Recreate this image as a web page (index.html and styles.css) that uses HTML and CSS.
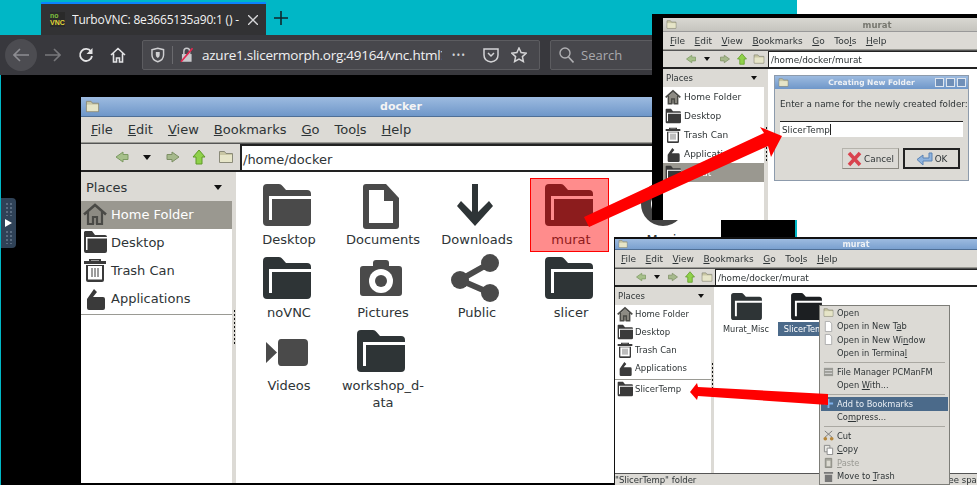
FILE: index.html
```html
<!DOCTYPE html>
<html lang="en">
<head>
<meta charset="utf-8">
<title>TurboVNC</title>
<link rel="stylesheet" href="styles.css">
</head>
<body>
<svg class="defs" width="0" height="0" aria-hidden="true">
  <symbol id="folder" viewBox="0 0 48 42">
    <path fill="currentColor" d="M4 0h12q2 0 3.500 2l3.500 4h21q4 0 4 4v28q0 4-4 4H4q-4 0-4-4V4q0-4 4-4z"/>
    <path fill="#fff" d="M6 36V12h42v3H9v21z"/>
  </symbol>
  <symbol id="doc" viewBox="0 0 36 45">
    <path fill="#4a4a4a" d="M3 0h20l13 14v28q0 3-3 3H3q-3 0-3-3V3q0-3 3-3z"/>
    <path fill="#fff" d="M6 6h15v11h9v22H6z"/>
  </symbol>
  <symbol id="down" viewBox="0 0 36 42">
    <path fill="#2e3436" d="M15 0h6v28l11-11 4 5-18 20L0 22l4-5 11 11z"/>
  </symbol>
  <symbol id="camera" viewBox="0 0 42 36">
    <path fill="#4a4a4a" d="M13 3q0-3 3-3h10q3 0 3 3v3h10q3 0 3 3v24q0 3-3 3H3q-3 0-3-3V9q0-3 3-3h10z"/>
    <circle cx="21" cy="21" r="12" fill="#fff"/><circle cx="21" cy="21" r="6" fill="#4a4a4a"/>
  </symbol>
  <symbol id="share" viewBox="0 0 48 48">
    <g fill="#4a4a4a"><circle cx="39" cy="9" r="9"/><circle cx="9" cy="26" r="9"/><circle cx="39" cy="39" r="9"/></g>
    <path fill="none" stroke="#4a4a4a" stroke-width="6" d="M39 9 9 26l30 13"/>
  </symbol>
  <symbol id="video" viewBox="0 0 42 27">
    <path fill="#4a4a4a" d="M0 3l11 10.500L0 24zM15 0h23q4 0 4 4v19q0 4-4 4H15q-3 0-3-4V4q0-4 3-4z"/>
  </symbol>
  <symbol id="headset" viewBox="0 0 48 48">
    <circle cx="24" cy="24" r="17" fill="none" stroke="#444" stroke-width="10"/>
  </symbol>
  <symbol id="home" viewBox="0 0 24 24">
    <path fill="#8d8b83" d="M5 11l7-6 7 6v11H5z"/>
    <path fill="none" stroke="#4a4a46" stroke-width="2.600" d="M1 12.500 12 3l11 9.500"/>
    <path fill="none" stroke="#4a4a46" stroke-width="2.200" d="M5 10v12h5v-7h4v7h5V10"/>
  </symbol>
  <symbol id="sfolder" viewBox="0 0 24 24">
    <path fill="#3a3a3a" d="M2 1h7l3 4h10q2 0 2 2v14q0 2-2 2H3q-2 0-2-2V2z"/>
    <path fill="#fff" d="M3 7h21v1.500H4.500V20H3z"/>
  </symbol>
  <symbol id="trash" viewBox="0 0 24 24">
    <path fill="#3a3a3a" d="M1 3h5V1h12v2h5v3H1zM8 2.500V3h8v-.5zM3 7h18v15q0 2-2 2H5q-2 0-2-2z"/>
    <path fill="#fff" d="M5 8h14v13.500H5z"/>
    <path stroke="#3a3a3a" d="M9 10v9M12 10v9M15 10v9"/>
  </symbol>
  <symbol id="apps" viewBox="0 0 24 24">
    <path fill="#3a3a3a" d="M4 13 11 3l3 3-4 5h10q2 0 2 2v9q0 2-2 2H6q-2 0-2-2z"/>
  </symbol>
  <symbol id="tfolder" viewBox="0 0 16 16">
    <path fill="#c9c7a4" stroke="#8a8a78" d="M1.500 2.500h5l1.500 2h6.500v9h-13z"/>
    <path fill="#e6e5c8" d="M2 6h12v7H2z"/>
  </symbol>
  <symbol id="nleft" viewBox="0 0 16 16">
    <path fill="#a6c08a" stroke="#7c9a62" d="M9 3 2 8l7 5v-2.500h5v-5H9z"/>
  </symbol>
  <symbol id="nright" viewBox="0 0 16 16">
    <path fill="#a6b98c" stroke="#7d8f64" d="M7 3l7 5-7 5v-2.500H2v-5h5z"/>
  </symbol>
  <symbol id="nup" viewBox="0 0 16 16">
    <path fill="#8fd14a" stroke="#5f9a27" d="M8 1 2 8h3v7h6V8h3z"/>
  </symbol>
  <symbol id="page" viewBox="0 0 12 12">
    <path fill="#fff" stroke="#aaa" d="M2.500.5h5l2 2.500v8.500h-7z"/>
  </symbol>
  <symbol id="tool" viewBox="0 0 12 12">
    <path fill="#9b9b96" d="M1 2h10v9H1z"/><path stroke="#ddd" d="M2 5h8M2 8h8"/>
  </symbol>
  <symbol id="plus" viewBox="0 0 12 12">
    <path stroke="#7fb0ea" stroke-width="2" d="M6 1v10M1 6h10"/>
  </symbol>
  <symbol id="cut" viewBox="0 0 12 12">
    <path stroke="#777" d="M2 1l8 7M10 1 2 8"/><circle cx="2.500" cy="9.500" r="2" fill="#b5863a"/><circle cx="9.500" cy="9.500" r="2" fill="#b5863a"/>
  </symbol>
  <symbol id="copy" viewBox="0 0 12 12">
    <path fill="#e8e8e4" stroke="#888" d="M1.500 1.500h6v7h-6z"/><path fill="#fff" stroke="#888" d="M4.500 4.500h6v7h-6z"/>
  </symbol>
  <symbol id="paste" viewBox="0 0 12 12">
    <path fill="#a5a59c" stroke="#8a8a82" d="M2.500 1.500h7v10h-7z"/><path fill="#dcdad2" d="M4 4h4v6H4z"/>
  </symbol>
  <symbol id="mtrash" viewBox="0 0 12 12">
    <path fill="#777" d="M1 1h10v2H1zM2 4h8v8H2z"/>
  </symbol>
</svg>

<main class="desk">
  <section class="browser">
    <div class="tabstrip">
      <div class="tab">
        <span class="favicon"><b class="fav-no">no</b><b class="fav-vnc">VNC</b></span>
        <span class="tab-title">TurboVNC: 8e3665135a90:1 () -</span>
        <svg class="tab-x" width="10" height="10" viewBox="0 0 10 10"><path stroke="#d8d8da" stroke-width="1.300" d="M0 0l10 10M10 0 0 10"/></svg>
      </div>
      <svg class="tab-new" width="14" height="14" viewBox="0 0 14 14"><path stroke="#10262b" stroke-width="1.600" d="M7 0v14M0 7h14"/></svg>
    </div>
    <div class="navbar">
      <span class="back"><svg width="16" height="14" viewBox="0 0 16 14"><path fill="none" stroke="#8d8d92" stroke-width="1.600" d="M7 1 1 7l6 6M1 7h15"/></svg></span>
      <svg class="nav-ico fwd" width="16" height="14" viewBox="0 0 16 14"><path fill="none" stroke="#77777b" stroke-width="1.600" d="M9 1l6 6-6 6M15 7H0"/></svg>
      <svg class="nav-ico reload" width="16" height="16" viewBox="0 0 16 16"><path fill="none" stroke="#e4e4e6" stroke-width="1.800" d="M13 4.500A6 6 0 1 0 14 9"/><path fill="#e4e4e6" d="M14.500 1v6h-6z"/></svg>
      <svg class="nav-ico homeb" width="16" height="16" viewBox="0 0 16 16"><path fill="none" stroke="#e4e4e6" stroke-width="1.600" d="M1 8l7-6.500L15 8M3.500 6.500V15h3v-4h3v4h3V6.500"/></svg>
      <div class="urlbar">
        <svg class="u-shield" width="14" height="16" viewBox="0 0 14 16"><path fill="none" stroke="#cfcfd1" stroke-width="1.500" d="M1 2.500 7 1l6 1.500V8q0 5-6 7-6-2-6-7z"/><path fill="#cfcfd1" d="M5 5h4v3q0 2-2 3-2-1-2-3z"/></svg>
        <span class="u-sep"></span>
        <svg class="u-lock" width="14" height="16" viewBox="0 0 14 16"><path fill="#c9c9cc" d="M2 7h10v8H2z"/><path fill="none" stroke="#c9c9cc" stroke-width="1.500" d="M4 7V4q0-3 3-3t3 3v3"/><path stroke="#e22850" stroke-width="1.800" d="M13 1 1 15"/></svg>
        <span class="u-text">azure1.slicermorph.org:49164/vnc.html?k</span>
        <span class="u-dots">•••</span>
        <svg class="u-ico" width="16" height="16" viewBox="0 0 16 16"><path fill="none" stroke="#d4d4d6" stroke-width="1.500" d="M1 2h14v6q0 6-7 7-7-1-7-7z"/><path fill="none" stroke="#d4d4d6" stroke-width="1.500" d="M5 6l3 3 3-3"/></svg>
        <svg class="u-ico" width="16" height="16" viewBox="0 0 16 16"><path fill="none" stroke="#d4d4d6" stroke-width="1.500" d="M8 1l2.100 4.600 5 .6-3.700 3.400 1 4.900L8 12.100l-4.400 2.400 1-4.900L.9 6.200l5-.6z"/></svg>
      </div>
      <div class="searchbar">
        <svg width="15" height="16" viewBox="0 0 15 16"><circle cx="6" cy="6" r="5" fill="none" stroke="#b0b0b3" stroke-width="1.400"/><path stroke="#b0b0b3" stroke-width="1.600" d="M9.500 10l5 5.500"/></svg>
        <span>Search</span>
      </div>
    </div>
    <div class="screen">
      <div class="handle">
        <span class="dots"></span>
        <svg width="7" height="8" viewBox="0 0 7 8"><path fill="#fff" d="M0 0l7 4-7 4z"/></svg>
        <span class="dots"></span>
      </div>
    </div>
  </section>

  <section class="win win-main">
    <header class="titlebar"><svg class="t-ico"><use href="#tfolder"/></svg><span class="t-text">docker</span></header>
    <nav class="menubar"><span><u>F</u>ile</span><span><u>E</u>dit</span><span><u>V</u>iew</span><span><u>B</u>ookmarks</span><span><u>G</u>o</span><span>Too<u>l</u>s</span><span><u>H</u>elp</span></nav>
    <div class="toolbar">
      <svg><use href="#nleft"/></svg><i class="tri"></i><svg><use href="#nright"/></svg><svg><use href="#nup"/></svg><svg><use href="#tfolder"/></svg>
      <div class="path">/home/docker</div>
    </div>
    <div class="panes">
      <aside class="side">
        <div class="side-head"><span>Places</span><i class="tri"></i></div>
        <div class="side-list">
          <div class="row sel"><svg><use href="#home"/></svg>Home Folder</div>
          <div class="row"><svg><use href="#sfolder"/></svg>Desktop</div>
          <div class="row"><svg><use href="#trash"/></svg>Trash Can</div>
          <div class="row"><svg><use href="#apps"/></svg>Applications</div>
          <hr class="side-sep">
        </div>
      </aside>
      <div class="split"><span></span></div>
      <div class="files">
        <div class="cell"><svg class="ic-f grey"><use href="#folder"/></svg><span>Desktop</span></div>
        <div class="cell"><svg class="ic-doc"><use href="#doc"/></svg><span>Documents</span></div>
        <div class="cell"><svg class="ic-down"><use href="#down"/></svg><span>Downloads</span></div>
        <div class="cell"><svg class="ic-f"><use href="#folder"/></svg><span>murat</span></div>
        <div class="cell"><svg class="ic-head"><use href="#headset"/></svg><span>Music</span></div>
        <div class="cell"><svg class="ic-f"><use href="#folder"/></svg><span>noVNC</span></div>
        <div class="cell"><svg class="ic-cam"><use href="#camera"/></svg><span>Pictures</span></div>
        <div class="cell"><svg class="ic-share"><use href="#share"/></svg><span>Public</span></div>
        <div class="cell"><svg class="ic-f"><use href="#folder"/></svg><span>slicer</span></div>
        <div class="cell empty"></div>
        <div class="cell"><svg class="ic-vid"><use href="#video"/></svg><span>Videos</span></div>
        <div class="cell"><svg class="ic-f"><use href="#folder"/></svg><span>workshop_d-<br>ata</span></div>
      </div>
    </div>
  </section>

  <div class="mark"></div>

  <section class="frame frame-top">
    <div class="win win-b">
      <header class="titlebar"><svg class="t-ico"><use href="#tfolder"/></svg><span class="t-text">murat</span></header>
      <nav class="menubar"><span><u>F</u>ile</span><span><u>E</u>dit</span><span><u>V</u>iew</span><span><u>B</u>ookmarks</span><span><u>G</u>o</span><span>Too<u>l</u>s</span><span><u>H</u>elp</span></nav>
      <div class="toolbar">
        <svg><use href="#nleft"/></svg><i class="tri"></i><svg><use href="#nright"/></svg><svg><use href="#nup"/></svg><svg><use href="#tfolder"/></svg>
        <div class="path">/home/docker/murat</div>
      </div>
      <div class="panes">
        <aside class="side">
          <div class="side-head"><span>Places</span><i class="tri"></i></div>
          <div class="side-list">
            <div class="row"><svg><use href="#home"/></svg>Home Folder</div>
            <div class="row"><svg><use href="#sfolder"/></svg>Desktop</div>
            <div class="row"><svg><use href="#trash"/></svg>Trash Can</div>
            <div class="row"><svg><use href="#apps"/></svg>Applications</div>
            <div class="row sel"><svg><use href="#sfolder"/></svg>murat</div>
          </div>
        </aside>
        <div class="split"><span></span></div>
        <div class="files"></div>
      </div>
    </div>
    <div class="dialog">
      <header class="dlg-title">
        <svg class="t-ico"><use href="#tfolder"/></svg>
        <span class="t-text">Creating New Folder</span>
        <span class="dlg-btns"><i></i><i></i><i></i></span>
      </header>
      <p class="dlg-msg">Enter a name for the newly created folder:</p>
      <div class="dlg-input">SlicerTemp<span class="caret"></span></div>
      <div class="dlg-actions">
        <button class="btn"><svg width="15" height="16" viewBox="0 0 15 16"><path stroke="#d9434e" stroke-width="3.500" d="M2 2l11 12M13 2 2 14"/></svg>Cancel</button>
        <button class="btn btn-def"><svg width="17" height="14" viewBox="0 0 17 14"><path fill="#8fb3dd" stroke="#5b83b5" d="M16 1v8H7v4L1 7.500 7 3v3h6V1z"/></svg>OK</button>
      </div>
    </div>
  </section>

  <section class="win win-c">
    <header class="titlebar"><svg class="t-ico"><use href="#tfolder"/></svg><span class="t-text">murat</span></header>
    <nav class="menubar"><span><u>F</u>ile</span><span><u>E</u>dit</span><span><u>V</u>iew</span><span><u>B</u>ookmarks</span><span><u>G</u>o</span><span>Too<u>l</u>s</span><span><u>H</u>elp</span></nav>
    <div class="toolbar">
      <svg><use href="#nleft"/></svg><i class="tri"></i><svg><use href="#nright"/></svg><svg><use href="#nup"/></svg><svg><use href="#tfolder"/></svg>
      <div class="path">/home/docker/murat</div>
    </div>
    <div class="panes">
      <aside class="side">
        <div class="side-head"><span>Places</span><i class="tri"></i></div>
        <div class="side-list">
          <div class="row"><svg><use href="#home"/></svg>Home Folder</div>
          <div class="row"><svg><use href="#sfolder"/></svg>Desktop</div>
          <div class="row"><svg><use href="#trash"/></svg>Trash Can</div>
          <div class="row"><svg><use href="#apps"/></svg>Applications</div>
          <hr class="side-sep">
          <div class="row"><svg><use href="#sfolder"/></svg>SlicerTemp</div>
        </div>
      </aside>
      <div class="split"><span></span></div>
      <div class="files">
        <div class="cell"><svg class="ic-f"><use href="#folder"/></svg><span>Murat_Misc</span></div>
        <div class="cell"><svg class="ic-f blackf"><use href="#folder"/></svg><span class="picked">SlicerTemp</span></div>
      </div>
    </div>
    <footer class="status"><span>"SlicerTemp" folder</span><span>Free space: 1 TB</span></footer>
  </section>

  <div class="menu">
    <div class="mi"><svg><use href="#tfolder"/></svg><span>Open</span></div>
    <div class="mi"><svg><use href="#page"/></svg><span>Open in New T<u>a</u>b</span></div>
    <div class="mi"><svg><use href="#page"/></svg><span>Open in New Wi<u>n</u>dow</span></div>
    <div class="mi"><i class="mi-blank"></i><span>Open in Termina<u>l</u></span></div>
    <hr class="mi-sep">
    <div class="mi"><svg><use href="#tool"/></svg><span>File Manager PCManFM</span></div>
    <div class="mi"><i class="mi-blank"></i><span>Open <u>W</u>ith...</span></div>
    <hr class="mi-sep">
    <div class="mi on"><svg><use href="#plus"/></svg><span>Add to Bookmarks</span></div>
    <div class="mi"><i class="mi-blank"></i><span>Co<u>m</u>press...</span></div>
    <hr class="mi-sep">
    <div class="mi"><svg><use href="#cut"/></svg><span>Cut</span></div>
    <div class="mi"><svg><use href="#copy"/></svg><span><u>C</u>opy</span></div>
    <div class="mi off"><svg><use href="#paste"/></svg><span><u>P</u>aste</span></div>
    <div class="mi"><svg><use href="#mtrash"/></svg><span>Move to <u>T</u>rash</span></div>
  </div>

  <svg class="arrows" width="977" height="485" viewBox="0 0 977 485" aria-hidden="true">
    <path fill="#ff0000" d="M584 217 764 133 760 127 782 136 771 157 768 146 589 227z"/>
    <path fill="#ff0000" d="M828 394 698 387 697 383 690 392 697 400 698 396 828 405z"/>
  </svg>
</main>
</body>
</html>
```

FILE: styles.css
```css
* { box-sizing: border-box; }
html, body { margin: 0; padding: 0; background: #fff; }
.defs { position: absolute; }
.desk {
  position: relative;
  width: 977px;
  height: 485px;
  overflow: hidden;
  background: #fff;
  font-family: "DejaVu Sans", sans-serif;
  color: #2e3436;
}

/* browser */
.browser {
  width: 797px;
  height: 100%;
  padding-top: 1px;
  display: flex;
  flex-direction: column;
  background: #00b7c6;
  font-family: "Open Sans", sans-serif;
}
.tabstrip { height: 34px; display: flex; align-items: stretch; padding-left: 41px; }
.tab {
  width: 225px;
  margin-top: 1px;
  padding-left: 9px;
  display: flex;
  align-items: center;
  background: #323234;
  border-top: 2px solid #0a84ff;
  color: #f2f2f3;
  font-size: 12px;
}
.favicon {
  width: 15px; height: 15px;
  display: flex; flex-direction: column;
  font: bold 7px/7px "Liberation Sans", sans-serif;
  margin-right: 7px;
  background: #2a2a2a;
}
.fav-no { color: #7ec13f; }
.fav-vnc { color: #e3d83a; }
.tab-title { white-space: nowrap; width: 171px; overflow: hidden; letter-spacing: -.2px; }
.tab-x { margin-left: 5px; }
.tab-new { align-self: center; margin-left: 8px; }
.navbar {
  height: 40px;
  display: flex;
  align-items: center;
  background: #38383d;
  padding-left: 5px;
  overflow: hidden;
}
.back {
  width: 32px; height: 32px;
  border-radius: 50%;
  background: #4c4c51;
  display: flex; align-items: center; justify-content: center;
  flex: none;
}
.nav-ico { flex: none; }
.fwd { margin-left: 8px; }
.reload { margin-left: 17px; }
.homeb { margin-left: 16px; }
.urlbar {
  flex: none;
  width: 398px;
  height: 30px;
  margin-left: 16px;
  padding-left: 8px;
  display: flex;
  align-items: center;
  background: #47474c;
  border: 1px solid #5c5c60;
  border-radius: 2px;
  color: #f1f1f2;
}
.u-sep { width: 1px; height: 18px; background: #6a6a6e; margin: 0 7px; }
.u-text {
  width: 248px; margin-left: 9px; overflow: hidden; white-space: nowrap;
  font-size: 13.500px; letter-spacing: -.25px;
}
.u-dots { margin: 0 17px 0 10px; font-size: 10px; letter-spacing: 1px; color: #d4d4d6; white-space: nowrap; }
.u-ico { margin-right: 12px; flex: none; }
.searchbar {
  flex: none;
  width: 200px;
  height: 30px;
  margin-left: 10px;
  padding-left: 8px;
  display: flex; align-items: center; gap: 7px;
  background: #47474c;
  border: 1px solid #5c5c60;
  border-radius: 2px;
  color: #a9a9ac;
  font-size: 13px;
}
.screen { flex: 1; background: #000; margin: 0 2px 0 1px; padding-top: 123px; }
.handle {
  width: 15px; height: 50px;
  background: #2f4257;
  border-radius: 0 4px 4px 0;
  display: flex; flex-direction: column; align-items: center; justify-content: center; gap: 3px;
}
.dots {
  width: 7px; height: 14px;
  background: radial-gradient(circle, #5a6c80 1px, transparent 1.2px) 0 0 / 4px 4px;
}

/* file manager windows */
.win {
  position: absolute;
  display: flex;
  flex-direction: column;
  background: #dcdad5;
  overflow: hidden;
  --toolcols: 16px 16px 19px 16px 18px;
}
.titlebar {
  position: relative;
  flex: none;
  display: flex; align-items: center; justify-content: center;
  background: linear-gradient(#9dbbe0, #6f97c9);
  border-bottom: 1px solid #4f6f96;
  color: #f4f4f4;
  font-weight: bold;
}
.t-ico { position: absolute; left: 4px; top: 2px; width: 14px; height: 14px; }
.menubar { flex: none; display: flex; align-items: center; border-bottom: 1px solid #9a9a94; }
.toolbar {
  flex: none;
  display: grid;
  align-items: center;
  justify-items: center;
  grid-template-columns: var(--toolcols) 1fr;
  border-top: 1px solid #555;
  border-bottom: 2px solid #222;
}
.tri {
  width: 0; height: 0;
  border-style: solid;
  border-color: #111 transparent transparent;
  border-width: 5px 4.500px 0;
  display: block;
}
.path {
  justify-self: stretch;
  height: 100%;
  background: #fff;
  border-top: 2px solid #222;
  border-left: 2px solid #222;
  display: flex; align-items: center;
  padding-left: 1px;
  white-space: nowrap;
}
.panes { flex: 1; min-height: 0; display: flex; }
.side { flex: none; display: flex; flex-direction: column; }
.side-head { flex: none; display: flex; align-items: center; justify-content: space-between; }
.side-list { flex: 1; background: #fff; }
.row { display: flex; align-items: center; white-space: nowrap; }
.row.sel { background: #9a9890; color: #fff; }
.side-sep { margin: 0; border: 0; border-top: 1px solid #9a9a94; }
.split { flex: none; background: #dcdad5; display: flex; justify-content: center; align-items: center; }
.split span { width: 1px; height: 35px; background: repeating-linear-gradient(#111 0 2px, transparent 2px 4px); }
.files { flex: 1; background: #fff; display: grid; align-content: start; }
.cell { display: flex; flex-direction: column; align-items: center; text-align: center; }
.cell svg { display: block; color: #2e3436; }
.grey { color: #4a4a4a !important; }

/* main window */
.win-main {
  left: 81px; top: 97px; width: 640px; height: 386px;
  --toolcols: 25px 25px 27px 25px 29px;
}
.win-main .titlebar { height: 20px; font-size: 11px; }
.win-main .t-ico { left: 4px; top: 2px; width: 15px; height: 15px; }
.win-main .menubar { height: 26px; padding-left: 10px; gap: 15px; font-size: 13px; }
.win-main .toolbar { height: 29px; padding-left: 28px; }
.win-main .toolbar svg { width: 16px; height: 16px; }
.win-main .path { font-size: 13px; padding-top: 2px; }
.win-main .side { width: 151px; }
.win-main .side-head { height: 29px; padding: 2px 10px 0 5px; font-size: 13px; }
.win-main .row { height: 28px; padding: 0 0 2px 2px; gap: 4px; font-size: 13px; }
.win-main .row svg { width: 24px; height: 24px; flex: none; }
.win-main .side-sep { margin: 1px 0 0; }
.win-main .split { width: 4px; }
.win-main .files { grid-template-columns: repeat(5, 94px); grid-auto-rows: 73px; padding: 6px 0 0 6px; }
.win-main .cell { padding-top: 6px; font-size: 13px; line-height: 17px; position: relative; }
.win-main .cell svg { margin-right: 4px; }
.win-main .cell span { position: absolute; top: 53px; width: 94px; left: 0; }
.ic-f { width: 48px; height: 42px; }
.ic-doc { width: 36px; height: 45px; }
.ic-down { width: 36px; height: 42px; }
.ic-cam { width: 42px; height: 36px; margin-top: 3px; }
.ic-share { width: 48px; height: 48px; margin-top: -3px; }
.ic-vid { width: 42px; height: 27px; margin-top: 9px; }
.ic-head { width: 48px; height: 48px; margin-top: -4px; }

.mark {
  position: absolute;
  left: 530px; top: 178px; width: 79px; height: 74px;
  background: rgba(255, 0, 0, .45);
  border: 1px solid #f00;
}

/* top-right window */
.frame {
  position: absolute;
  left: 652px; top: 14px; width: 325px; height: 206px;
  background: #000;
}
.win-b, .win-c { filter: blur(.35px); }
.win-b { left: 11px; top: 4px; width: 314px; height: 202px; }
.win-b .titlebar {
  background: linear-gradient(#d9d8d2, #c5c4be);
  color: #77776f;
  border-bottom: 1px solid #999;
  height: 14px;
  font-size: 8.500px;
  padding-left: 114px;
}
.win-b .t-ico, .win-c .t-ico { width: 11px; height: 11px; top: 1px; left: 3px; }
.win-b .menubar, .win-c .menubar { gap: 9.500px; font-size: 9px; }
.win-b .menubar { height: 18px; padding-left: 7px; }
.win-b .toolbar { height: 19px; padding-left: 20px; }
.win-b .toolbar svg, .win-c .toolbar svg { width: 12px; height: 12px; }
.win-b .tri, .win-c .tri { border-width: 4px 3.500px 0; }
.win-b .path, .win-c .path { font-size: 8.900px; border-top-width: 1px; border-left-width: 1px; padding-left: 2px; }
.win-b .side { width: 101px; }
.win-b .side-head, .win-c .side-head { height: 18px; padding: 0 7px 0 3px; font-size: 8.500px; }
.win-b .row { height: 19px; padding-left: 2px; gap: 3px; font-size: 9px; }
.win-b .row svg, .win-c .row svg { width: 16px; height: 16px; flex: none; }
.win-b .split { width: 4px; }

.dialog {
  position: absolute;
  left: 122px; top: 61px; width: 195px; height: 106px;
  background: #dcdad5;
  border: 1px solid #8d9bac;
  filter: blur(.35px);
  font-size: 8.800px;
  display: flex;
  flex-direction: column;
}
.dlg-title {
  position: relative;
  flex: none;
  height: 13px;
  background: linear-gradient(#9dbbe0, #6f97c9);
  color: #eef1f5;
  font-size: 7.500px;
  font-weight: bold;
  display: flex; align-items: center; justify-content: center;
}
.dlg-title .t-ico { width: 11px; height: 11px; left: 3px; top: 1px; }
.dlg-btns { position: absolute; right: 2px; top: 2px; display: flex; gap: 2px; }
.dlg-btns i { width: 9px; height: 9px; background: #6f8fb8; border: 1px solid #dfe6ef; display: block; }
.dlg-msg { margin: 9px 0 0 5px; line-height: 13px; white-space: nowrap; }
.dlg-input {
  margin: 10px 5px 0;
  height: 16px;
  background: #fff;
  border-top: 1px solid #222;
  padding-left: 2px;
  display: flex; align-items: center;
}
.caret { width: 1px; height: 11px; background: #222; }
.dlg-actions { margin: 11px 8px 0 0; display: flex; justify-content: flex-end; gap: 4px; }
.btn {
  width: 57px; height: 21px;
  padding: 0;
  display: flex; align-items: center; justify-content: center; gap: 2px;
  background: #dcdad5;
  border: 1px solid #b5b3ac;
  border-right-color: #8a8880;
  border-bottom-color: #8a8880;
  font: 8.800px "DejaVu Sans", sans-serif;
  color: #2e3436;
}
.btn-def { border: 2px solid #222; }

/* bottom-right window */
.win-c {
  left: 614px; top: 237px; width: 363px; height: 248px;
  border-top: 2px solid #111;
  border-left: 1px solid #111;
  --toolcols: 16px 15px 18px 16px 17px;
}
.win-c .titlebar { height: 11px; font-size: 8px; background: linear-gradient(#9dbbe0, #7aa0cf); color: #eef1f5; padding-left: 120px; }
.win-c .t-ico { width: 10px; height: 10px; top: 0; }
.win-c .menubar { height: 18px; padding-left: 6px; }
.win-c .toolbar { height: 19px; padding-left: 18px; }
.win-c .side { width: 96px; }
.win-c .row { height: 18px; padding-left: 2px; gap: 2px; font-size: 8.500px; }
.win-c .side-sep { margin: 2px 0 0; }
.win-c .split { width: 3px; }
.win-c .files { grid-template-columns: 60px 60px; padding: 6px 0 0 2px; gap: 0; }
.win-c .cell { font-size: 8.200px; line-height: 14px; }
.win-c .ic-f { width: 31px; height: 27px; margin-bottom: 2px; }
.blackf { color: #1c1f22 !important; }
.picked { background: #4b6a8a; color: #fff; padding: 0 6px; white-space: nowrap; }
.status {
  flex: none;
  height: 12px;
  display: grid;
  grid-template-columns: 326px auto;
  font-size: 8.500px;
  line-height: 12px;
  white-space: nowrap;
  border-top: 1px solid #555;
  overflow: hidden;
}

/* context menu */
.menu {
  position: absolute;
  left: 819px; top: 305px; width: 131px; height: 180px;
  padding: 0 1px;
  background: #dcdad5;
  border: 1px solid #7d7d78;
  filter: blur(.35px);
  font-size: 8.300px;
  overflow: hidden;
}
.mi { height: 13.500px; display: flex; align-items: center; gap: 3px; padding-left: 2px; white-space: nowrap; }
.mi svg, .mi-blank { width: 11px; height: 11px; flex: none; display: block; }
.mi.on { background: #4b6a8a; color: #e8edf3; }
.mi.off { color: #9a9a94; }
.mi-sep { margin: 2px 3px; border: 0; border-top: 1px solid #aaa8a2; }

.arrows { position: absolute; left: 0; top: 0; pointer-events: none; }
```
